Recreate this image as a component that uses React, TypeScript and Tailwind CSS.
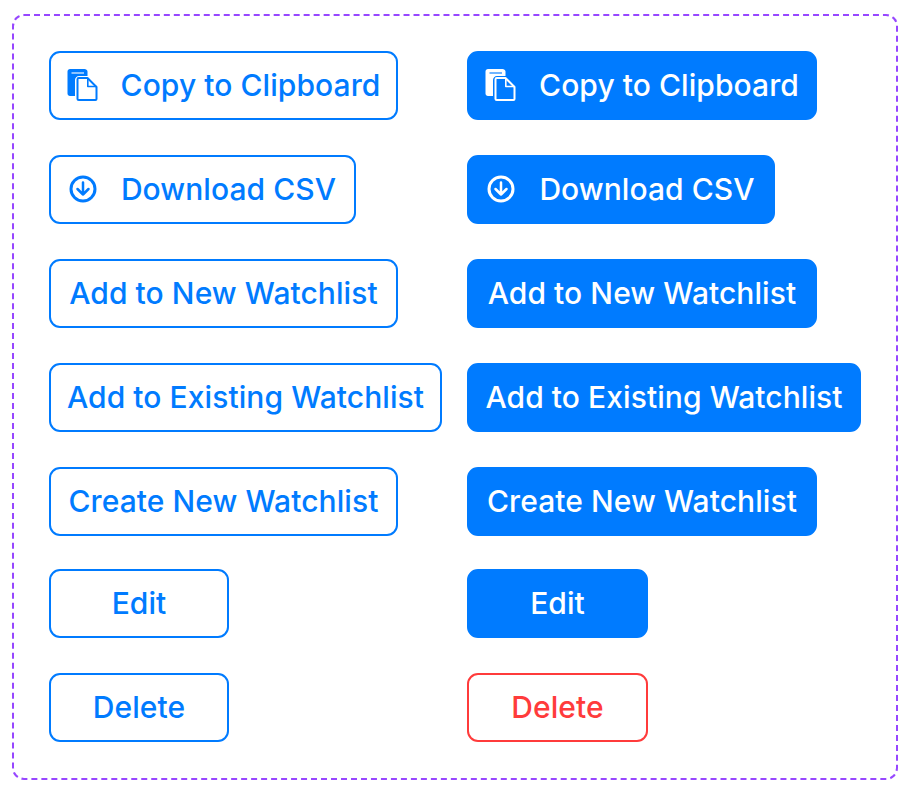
import { ReactNode } from "react";

function CopyIcon() {
    return (
        <svg width="32" height="32" viewBox="0 0 32 32" fill="none" className="shrink-0">
            <path
                d="M.5 2.500C.5 1.100 1.600 0 3 0h14.500C18.900 0 20.500 1.100 20.500 2.500V7h-8.500C9.800 7 8 8.800 8 11v16H3C1.600 27 .5 25.900 .5 24.500V2.500Z"
                fill="currentColor"
            />
            <path d="M4.500 4H17" stroke="var(--icon-hole)" strokeWidth="1.400" opacity=".8" />
            <path
                d="M11.800 9H20.500L29.500 18V30C29.500 30.500 29 31 28.500 31H11.800C11.200 31 10.500 30.500 10.500 30V10.300C10.500 9.600 11.100 9 11.800 9Z"
                stroke="currentColor"
                strokeWidth="2"
                strokeLinejoin="round"
            />
            <path d="M20.800 9V17.500H29.500" stroke="currentColor" strokeWidth="1.600" strokeLinejoin="round" />
        </svg>
    );
}

function DownloadIcon() {
    return (
        <svg width="28" height="28" viewBox="0 0 28 28" fill="none" stroke="currentColor" strokeWidth="3" className="shrink-0">
            <circle cx="14" cy="14" r="12" />
            <path d="M14 7.500V19.500M8.500 14l5.500 5.500 5.500-5.500" strokeWidth="2.500" strokeLinecap="round" strokeLinejoin="round" />
        </svg>
    );
}

type Variant = "outline" | "solid" | "danger";

function Btn({ label, icon, gap, variant, w, tight }: { label: string; icon?: ReactNode; gap?: string; variant: Variant; w: string; tight?: boolean }) {
    const colors =
        variant === "solid"
            ? "bg-[#007bff] border-[#007bff] text-white [--icon-hole:#007bff]"
            : variant === "danger"
              ? "bg-white border-[#ff3b3b] text-[#ff3b3b]"
              : "bg-white border-[#007bff] text-[#007bff] [--icon-hole:#ffffff]";
    return (
        <button
            className={`flex h-[69px] items-center justify-center rounded-[11px] border-2 pb-[2px] text-[30px] leading-none tracking-[0.07px] whitespace-nowrap ${colors} ${w} ${tight ? "-mt-[2px]" : ""}`}
        >
            {icon && <span className={`flex w-[32px] justify-start ${gap}`}>{icon}</span>}
            {label}
        </button>
    );
}

const rows: { label: string; icon?: ReactNode; gap?: string; left: string; right: string }[] = [
    { label: "Copy to Clipboard", icon: <CopyIcon />, gap: "mr-[22px]", left: "w-[349px]", right: "w-[350px]" },
    { label: "Download CSV", icon: <DownloadIcon />, gap: "mr-[20px]", left: "w-[307px]", right: "w-[308px]" },
    { label: "Add to New Watchlist", left: "w-[349px]", right: "w-[350px]" },
    { label: "Add to Existing Watchlist", left: "w-[393px]", right: "w-[394px]" },
    { label: "Create New Watchlist", left: "w-[349px]", right: "w-[350px]" },
    { label: "Edit", left: "w-[180px]", right: "w-[181px]" },
    { label: "Delete", left: "w-[180px]", right: "w-[181px]" },
];

export default function App() {
    return (
        <div className="h-[788px] w-[904px] bg-white pt-[14px] pl-[12px] font-['Inter',sans-serif] font-[450]">
            <div className="h-[766px] w-[886px] rounded-[12px] border-2 border-dashed border-[#9747ff] pt-[35px] pl-[35px]">
                <div className="grid w-fit grid-cols-[393px_auto] gap-x-[25px] gap-y-[35px]">
                    {rows.map((row, i) => (
                        <div key={row.label} className="contents">
                            <Btn label={row.label} icon={row.icon} gap={row.gap} w={row.left} tight={i === 5} variant="outline" />
                            <Btn label={row.label} icon={row.icon} gap={row.gap} w={row.right} tight={i === 5} variant={i === 6 ? "danger" : "solid"} />
                        </div>
                    ))}
                </div>
            </div>
        </div>
    );
}
